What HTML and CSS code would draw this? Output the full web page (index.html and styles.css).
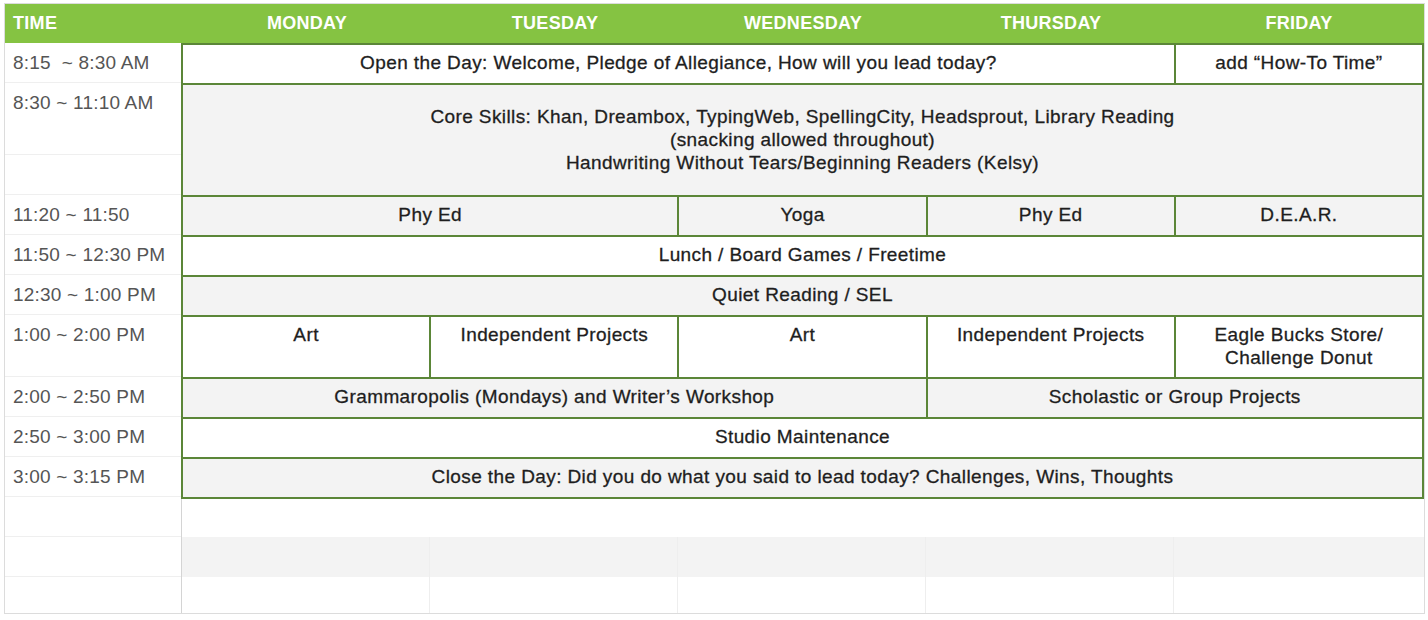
FILE: index.html
```html
<!DOCTYPE html>
<html>
<head>
<meta charset="utf-8">
<link rel="stylesheet" href="styles.css">
</head>
<body>
<div class="table">
  <div class="head">
    <div class="head-time">TIME</div>
    <div class="head-days">
      <div>MONDAY</div><div>TUESDAY</div><div>WEDNESDAY</div><div>THURSDAY</div><div>FRIDAY</div>
    </div>
  </div>
  <div class="body">
    <div class="times">
      <div class="t h40">8:15 &nbsp;~ 8:30 AM</div>
      <div class="t h72">8:30 ~ 11:10 AM</div>
      <div class="t h40"></div>
      <div class="t h40">11:20 ~ 11:50</div>
      <div class="t h40">11:50 ~ 12:30 PM</div>
      <div class="t h40">12:30 ~ 1:00 PM</div>
      <div class="t h62">1:00 ~ 2:00 PM</div>
      <div class="t h40">2:00 ~ 2:50 PM</div>
      <div class="t h40">2:50 ~ 3:00 PM</div>
      <div class="t h40">3:00 ~ 3:15 PM</div>
      <div class="t h40"></div>
      <div class="t h40"></div>
      <div class="t h36 last"></div>
    </div>
    <div class="right">
      <div class="sched">
        <div class="c w span4">Open the Day: Welcome, Pledge of Allegiance, How will you lead today?</div>
        <div class="c w">add “How-To Time”</div>

        <div class="c g span5 mid">Core Skills: Khan, Dreambox, TypingWeb, SpellingCity, Headsprout, Library Reading<br>(snacking allowed throughout)<br>Handwriting Without Tears/Beginning Readers (Kelsy)</div>

        <div class="c g span2">Phy Ed</div>
        <div class="c g">Yoga</div>
        <div class="c g">Phy Ed</div>
        <div class="c g">D.E.A.R.</div>

        <div class="c w span5">Lunch / Board Games / Freetime</div>

        <div class="c g span5">Quiet Reading / SEL</div>

        <div class="c w">Art</div>
        <div class="c w">Independent Projects</div>
        <div class="c w">Art</div>
        <div class="c w">Independent Projects</div>
        <div class="c w">Eagle Bucks Store/<br>Challenge Donut</div>

        <div class="c g span3">Grammaropolis (Mondays) and Writer’s Workshop</div>
        <div class="c g span2">Scholastic or Group Projects</div>

        <div class="c w span5">Studio Maintenance</div>

        <div class="c g span5">Close the Day: Did you do what you said to lead today? Challenges, Wins, Thoughts</div>
      </div>
      <div class="empty-full"></div>
      <div class="empty-row gray">
        <div></div><div></div><div></div><div></div><div></div>
      </div>
      <div class="empty-row short">
        <div></div><div></div><div></div><div></div><div></div>
      </div>
    </div>
  </div>
</div>
</body>
</html>
```

FILE: styles.css
```css
* { box-sizing: border-box; }
html, body { margin: 0; padding: 0; background: #fff; }
body {
  font-family: "Liberation Sans", Arial, sans-serif;
}
.table {
  margin: 3px 0 0 4px;
  width: 1421px;
  border: 1px solid #dcdcdc;
}
.head {
  display: grid;
  grid-template-columns: 177px 1fr;
  height: 39px;
  background: #85c342;
  color: #fff;
  font-weight: bold;
  font-size: 18px;
  letter-spacing: 0.3px;
}
.head-time {
  display: flex;
  align-items: center;
  padding-left: 8px;
}
.head-days {
  display: grid;
  grid-template-columns: repeat(5, 1fr);
  column-gap: 2px;
  padding: 0 2px;
}
.head-days > div {
  display: flex;
  align-items: center;
  justify-content: center;
}
.body {
  display: grid;
  grid-template-columns: 177px 1fr;
}
.times { display: flex; flex-direction: column; }
.t {
  border-bottom: 1px solid #efefef;
  padding: 8px 0 0 8px;
  font-size: 19px;
  line-height: 23px;
  letter-spacing: 0.2px;
  color: #555;
  white-space: pre;
}
.t.last { border-bottom: none; }
.h40 { height: 40px; }
.h72 { height: 72px; }
.h62 { height: 62px; }
.h36 { height: 36px; }

.right { display: flex; flex-direction: column; }
.sched {
  display: grid;
  grid-template-columns: repeat(5, 1fr);
  grid-template-rows: 38px 110px 38px 38px 38px 60px 38px 38px 38px;
  gap: 2px;
  background: #5b8638;
  border: 2px solid #5b8638;
  margin-left: -1px;
}
.c {
  font-size: 19px;
  line-height: 23px;
  letter-spacing: 0.4px;
  color: #1e1e1e;
  -webkit-text-stroke: 0.3px #1e1e1e;
  text-align: center;
  padding-top: 6px;
}
.w { background: #fff; }
.g { background: #f3f3f3; }
.mid { display: flex; align-items: center; justify-content: center; padding: 0 0 2px; }
.span2 { grid-column: span 2; }
.span3 { grid-column: span 3; }
.span4 { grid-column: span 4; }
.span5 { grid-column: span 5; }

.empty-full { height: 38px; border-left: 1px solid #d4d4d4; margin-left: -1px; }
.empty-row {
  display: grid;
  grid-template-columns: repeat(5, 1fr);
  column-gap: 2px;
  padding: 0 2px;
  height: 40px;
  border-left: 1px solid #d4d4d4;
  margin-left: -1px;
}
.empty-row.gray { background: #f3f3f3; }
.empty-row.short { height: 36px; }
.empty-row > div { border-right: 1px solid #eeeeee; }
.empty-row > div:last-child { border-right: none; }
```
